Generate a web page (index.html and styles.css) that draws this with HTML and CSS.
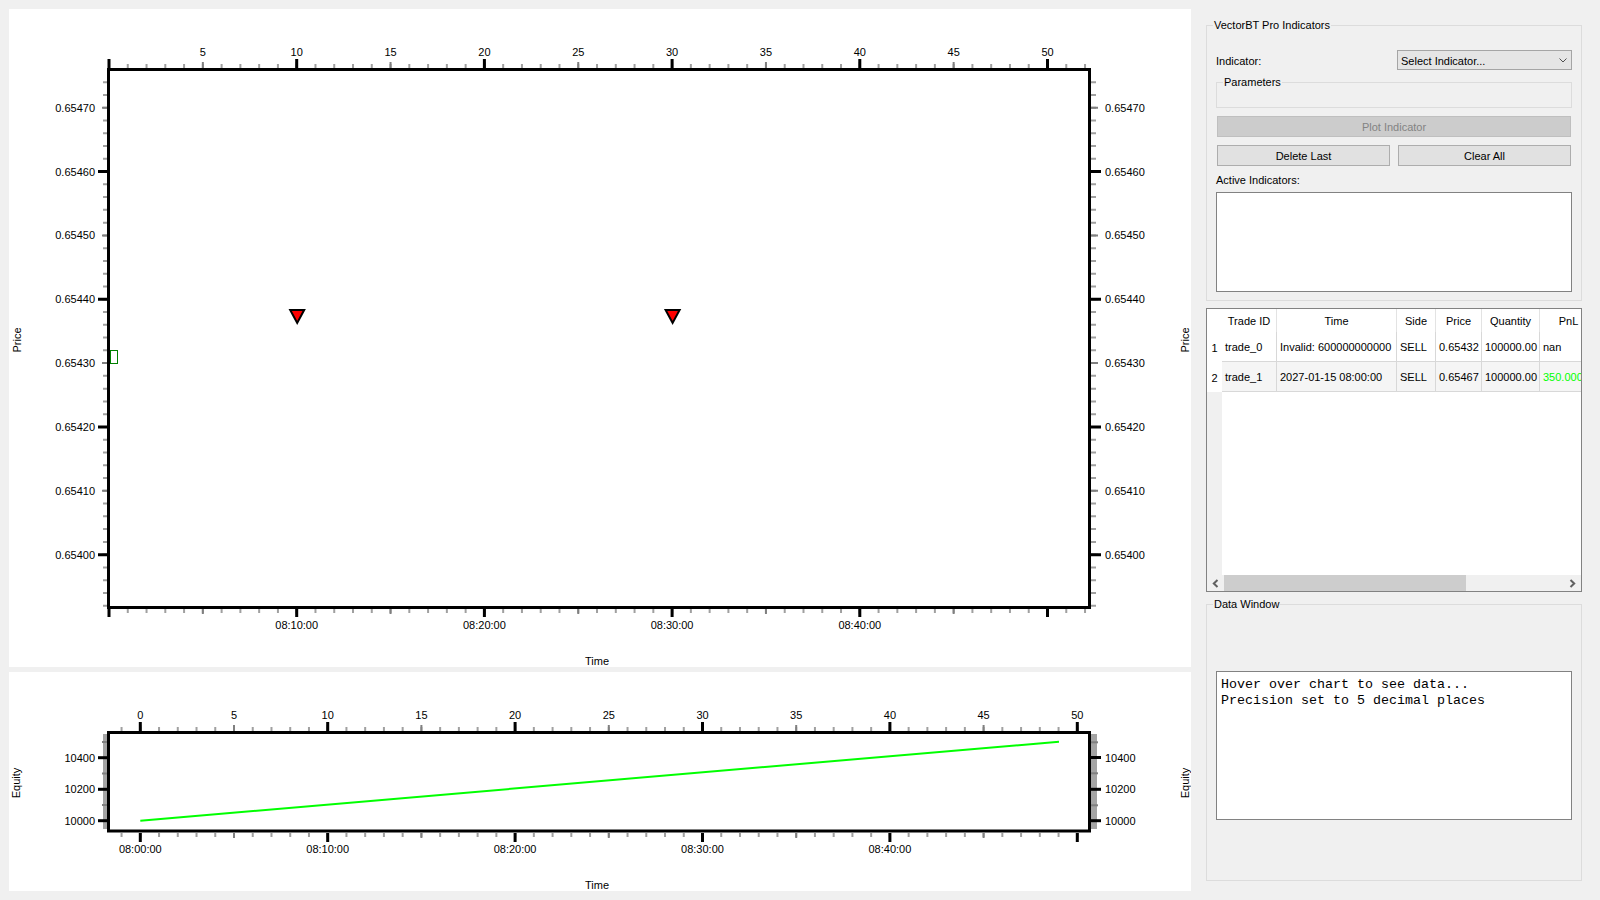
FILE: index.html
```html
<!DOCTYPE html>
<html lang="en">
<head>
<meta charset="utf-8">
<title>VectorBT Chart</title>
<link rel="stylesheet" href="styles.css">
</head>
<body>
<div class="app">
  <div class="charts">
    <div class="panel panel-main">
      <svg class="plot" width="1182" height="658" viewBox="9 9 1182 658">
        <!-- top ticks -->
        <line x1="108" y1="66" x2="1091" y2="66" class="t-minor" stroke-width="4" stroke-dasharray="2 16.77"/>
        <line x1="108" y1="65" x2="1091" y2="65" class="t-mid" stroke-width="6" stroke-dasharray="2 91.85"/>
        <line x1="107.5" y1="63.5" x2="1091" y2="63.5" class="t-major" stroke-width="9" stroke-dasharray="3 184.7"/>
        <!-- bottom ticks -->
        <line x1="108" y1="611" x2="1091" y2="611" class="t-minor" stroke-width="4" stroke-dasharray="2 16.77"/>
        <line x1="108" y1="611.5" x2="1091" y2="611.5" class="t-mid" stroke-width="5" stroke-dasharray="2 91.85"/>
        <line x1="107.5" y1="613" x2="1091" y2="613" class="t-major" stroke-width="8" stroke-dasharray="3 184.7"/>
        <!-- left ticks -->
        <line x1="105" y1="81.16" x2="105" y2="607" class="t-minor" stroke-width="4" stroke-dasharray="2 10.77"/>
        <line x1="104.5" y1="106.7" x2="104.5" y2="607" class="t-mid" stroke-width="5" stroke-dasharray="2 61.85"/>
        <line x1="102.5" y1="170.05" x2="102.5" y2="607" class="t-major" stroke-width="9" stroke-dasharray="3 124.7"/>
        <!-- right ticks -->
        <line x1="1093.5" y1="81.16" x2="1093.5" y2="607" class="t-minor" stroke-width="5" stroke-dasharray="2 10.77"/>
        <line x1="1094.5" y1="106.7" x2="1094.5" y2="607" class="t-mid" stroke-width="7" stroke-dasharray="2 61.85"/>
        <line x1="1096" y1="170.05" x2="1096" y2="607" class="t-major" stroke-width="10" stroke-dasharray="3 124.7"/>
        <!-- frame -->
        <rect x="108.5" y="69.5" width="981" height="538" class="frame"/>
        <g class="lbl-c">
          <text x="202.85" y="56">5</text>
          <text x="296.7" y="56">10</text>
          <text x="390.55" y="56">15</text>
          <text x="484.4" y="56">20</text>
          <text x="578.25" y="56">25</text>
          <text x="672.1" y="56">30</text>
          <text x="765.95" y="56">35</text>
          <text x="859.8" y="56">40</text>
          <text x="953.65" y="56">45</text>
          <text x="1047.5" y="56">50</text>
          <text x="296.7" y="629">08:10:00</text>
          <text x="484.4" y="629">08:20:00</text>
          <text x="672.1" y="629">08:30:00</text>
          <text x="859.8" y="629">08:40:00</text>
          <text x="597" y="665">Time</text>
          <text transform="translate(20.5 340) rotate(-90)">Price</text>
          <text transform="translate(1189 340) rotate(-90)">Price</text>
        </g>
        <g class="lbl-e">
          <text x="95" y="111.7">0.65470</text>
          <text x="95" y="175.6">0.65460</text>
          <text x="95" y="239.4">0.65450</text>
          <text x="95" y="303.3">0.65440</text>
          <text x="95" y="367.2">0.65430</text>
          <text x="95" y="431">0.65420</text>
          <text x="95" y="494.9">0.65410</text>
          <text x="95" y="558.7">0.65400</text>
        </g>
        <g class="lbl-s">
          <text x="1105" y="111.7">0.65470</text>
          <text x="1105" y="175.6">0.65460</text>
          <text x="1105" y="239.4">0.65450</text>
          <text x="1105" y="303.3">0.65440</text>
          <text x="1105" y="367.2">0.65430</text>
          <text x="1105" y="431">0.65420</text>
          <text x="1105" y="494.9">0.65410</text>
          <text x="1105" y="558.7">0.65400</text>
        </g>
        <!-- data -->
        <rect x="110.5" y="350.5" width="7" height="13" class="candle"/>
        <polygon points="290.2,310 304.2,310 297.2,323" class="sell"/>
        <polygon points="665.6,310 679.6,310 672.6,323" class="sell"/>
      </svg>
    </div>
    <div class="panel panel-eq">
      <svg class="plot" width="1182" height="219" viewBox="9 672 1182 219">
        <!-- top ticks -->
        <line x1="120.56" y1="729" x2="1080" y2="729" class="t-minor" stroke-width="4" stroke-dasharray="2 16.74"/>
        <line x1="139.3" y1="728" x2="1080" y2="728" class="t-mid" stroke-width="6" stroke-dasharray="2 91.7"/>
        <line x1="138.8" y1="726.5" x2="1080" y2="726.5" class="t-major" stroke-width="9" stroke-dasharray="3 184.4"/>
        <!-- bottom ticks -->
        <line x1="120.56" y1="835" x2="1080" y2="835" class="t-minor" stroke-width="4" stroke-dasharray="2 16.74"/>
        <line x1="139.3" y1="835.5" x2="1080" y2="835.5" class="t-mid" stroke-width="5" stroke-dasharray="2 91.7"/>
        <line x1="138.8" y1="837.5" x2="1080" y2="837.5" class="t-major" stroke-width="9" stroke-dasharray="3 184.4"/>
        <!-- left axis band -->
        <rect x="103" y="734" width="5" height="95" class="band"/>
        <line x1="102" y1="742" x2="108" y2="742" class="t-mid" stroke-width="2"/>
        <line x1="102" y1="773.5" x2="108" y2="773.5" class="t-mid" stroke-width="2"/>
        <line x1="102" y1="805" x2="108" y2="805" class="t-mid" stroke-width="2"/>
        <line x1="98" y1="757.7" x2="108" y2="757.7" class="t-major" stroke-width="3"/>
        <line x1="98" y1="789.3" x2="108" y2="789.3" class="t-major" stroke-width="3"/>
        <line x1="98" y1="820.7" x2="108" y2="820.7" class="t-major" stroke-width="3"/>
        <!-- right axis band -->
        <rect x="1091" y="734" width="6" height="95" class="band"/>
        <line x1="1090" y1="742.3" x2="1098" y2="742.3" class="t-mid" stroke-width="2"/>
        <line x1="1090" y1="773.3" x2="1098" y2="773.3" class="t-mid" stroke-width="2"/>
        <line x1="1090" y1="805.3" x2="1098" y2="805.3" class="t-mid" stroke-width="2"/>
        <line x1="1090" y1="757.5" x2="1101" y2="757.5" class="t-major" stroke-width="3"/>
        <line x1="1090" y1="789.3" x2="1101" y2="789.3" class="t-major" stroke-width="3"/>
        <line x1="1090" y1="820.7" x2="1101" y2="820.7" class="t-major" stroke-width="3"/>
        <!-- frame -->
        <rect x="108.5" y="732.5" width="981" height="98.5" class="frame"/>
        <!-- equity curve -->
        <polyline points="140.3,820.7 1059,741.7" class="equity"/>
        <g class="lbl-c">
          <text x="140.3" y="719">0</text>
          <text x="234" y="719">5</text>
          <text x="327.7" y="719">10</text>
          <text x="421.4" y="719">15</text>
          <text x="515.1" y="719">20</text>
          <text x="608.8" y="719">25</text>
          <text x="702.5" y="719">30</text>
          <text x="796.2" y="719">35</text>
          <text x="889.9" y="719">40</text>
          <text x="983.6" y="719">45</text>
          <text x="1077.3" y="719">50</text>
          <text x="140.3" y="852.5">08:00:00</text>
          <text x="327.7" y="852.5">08:10:00</text>
          <text x="515.1" y="852.5">08:20:00</text>
          <text x="702.5" y="852.5">08:30:00</text>
          <text x="889.9" y="852.5">08:40:00</text>
          <text x="597" y="889">Time</text>
          <text transform="translate(20 783) rotate(-90)">Equity</text>
          <text transform="translate(1189 783) rotate(-90)">Equity</text>
        </g>
        <g class="lbl-e">
          <text x="95" y="761.7">10400</text>
          <text x="95" y="793.3">10200</text>
          <text x="95" y="824.7">10000</text>
        </g>
        <g class="lbl-s">
          <text x="1105" y="761.5">10400</text>
          <text x="1105" y="793.3">10200</text>
          <text x="1105" y="824.7">10000</text>
        </g>
      </svg>
    </div>
  </div>

  <div class="side">
    <div class="group g-ind">
      <div class="g-title">VectorBT Pro Indicators</div>
      <div class="ind-row">
        <span class="ind-label">Indicator:</span>
        <div class="combo">
          <span class="combo-text">Select Indicator...</span>
          <svg class="chev" width="8" height="5" viewBox="0 0 8 5"><polyline points="0.5,0.5 4,4 7.5,0.5"/></svg>
        </div>
      </div>
      <div class="group g-params"><div class="g-title">Parameters</div></div>
      <div class="btn btn-disabled">Plot Indicator</div>
      <div class="btn-row">
        <div class="btn">Delete Last</div>
        <div class="btn">Clear All</div>
      </div>
      <div class="lbl">Active Indicators:</div>
      <div class="listbox"></div>
    </div>

    <div class="table">
      <div class="t-scroll">
        <div class="grid">
          <div class="corner"></div>
          <div class="hcell">Trade ID</div>
          <div class="hcell">Time</div>
          <div class="hcell">Side</div>
          <div class="hcell">Price</div>
          <div class="hcell">Quantity</div>
          <div class="hcell">PnL</div>

          <div class="rowhead">1</div>
          <div class="cell">trade_0</div>
          <div class="cell">Invalid: 600000000000</div>
          <div class="cell">SELL</div>
          <div class="cell">0.65432</div>
          <div class="cell">100000.00</div>
          <div class="cell">nan</div>

          <div class="rowhead">2</div>
          <div class="cell alt">trade_1</div>
          <div class="cell alt">2027-01-15 08:00:00</div>
          <div class="cell alt">SELL</div>
          <div class="cell alt">0.65467</div>
          <div class="cell alt">100000.00</div>
          <div class="cell alt pos">350.000</div>

          <div class="rowhead-empty"></div>
          <div class="empty"></div>
        </div>
      </div>
      <div class="hbar">
        <div class="arrow"><svg width="7" height="9" viewBox="0 0 7 9"><polyline points="5.5,1 1.8,4.5 5.5,8"/></svg></div>
        <div class="thumb"></div>
        <div class="track"></div>
        <div class="arrow"><svg width="7" height="9" viewBox="0 0 7 9"><polyline points="1.5,1 5.2,4.5 1.5,8"/></svg></div>
      </div>
    </div>

    <div class="group g-data">
      <div class="g-title">Data Window</div>
      <div class="datatext">Hover over chart to see data...
Precision set to 5 decimal places</div>
    </div>
  </div>
</div>
</body>
</html>
```

FILE: styles.css
```css
* { box-sizing: border-box; }
html, body { margin: 0; padding: 0; }
body {
  width: 1600px;
  height: 900px;
  overflow: hidden;
  background: #f0f0f0;
  color: #000;
  font-family: "Liberation Sans", Arial, sans-serif;
  font-size: 11px;
}
.app { display: flex; height: 900px; }

/* ---------- charts ---------- */
.charts {
  width: 1191px;
  padding: 9px 0 9px 9px;
  display: flex;
  flex-direction: column;
  gap: 5px;
}
.panel { background: #fff; }
.panel-main { height: 658px; }
.panel-eq { height: 219px; }
.plot { display: block; }
.plot text {
  font-family: "Liberation Sans", Arial, sans-serif;
  font-size: 11px;
  fill: #000;
}
.lbl-c text { text-anchor: middle; }
.lbl-e text { text-anchor: end; }
.lbl-s text { text-anchor: start; }
.t-minor { stroke: #a0a0a0; }
.t-mid { stroke: #808080; }
.t-major { stroke: #000; }
.frame { fill: none; stroke: #000; stroke-width: 3; }
.band { fill: #a4a4a4; }
.candle { fill: none; stroke: #008000; stroke-width: 1; }
.sell { fill: #ff0000; stroke: #000; stroke-width: 2; stroke-linejoin: miter; }
.equity { fill: none; stroke: #00ff00; stroke-width: 2; }

/* ---------- side panel ---------- */
.side {
  width: 409px;
  padding-left: 15px;
  display: flex;
  flex-direction: column;
}
.group {
  border: 1px solid #dcdcdc;
  padding: 0 9px;
}
.g-title {
  margin: -8px 0 0 -3px;
  padding: 0 1px;
  line-height: 14px;
  height: 14px;
  background: #f0f0f0;
  width: max-content;
}
.g-ind {
  margin-top: 25px;
  width: 376px;
  padding-bottom: 8px;
  display: flex;
  flex-direction: column;
}
.ind-row {
  margin-top: 18px;
  height: 20px;
  display: flex;
  align-items: center;
  justify-content: space-between;
}
.ind-label, .combo-text { padding-top: 2px; }
.combo {
  width: 175px;
  height: 20px;
  border: 1px solid #a5a5a5;
  background: #e5e5e5;
  padding: 0 4px 0 3px;
  display: flex;
  align-items: center;
  justify-content: space-between;
}
.chev polyline { fill: none; stroke: #505050; stroke-width: 1; }
.g-params {
  margin-top: 12px;
  height: 26px;
}
.btn {
  height: 21px;
  border: 1px solid #adadad;
  background: #e1e1e1;
  display: flex;
  align-items: center;
  justify-content: center;
}
.btn-disabled {
  margin: 8px 1px 0;
  background: #cccccc;
  border-color: #bfbfbf;
  color: #838383;
}
.btn-row {
  margin-top: 8px;
  padding: 0 1px;
  display: flex;
  gap: 8px;
}
.btn-row .btn { flex: 1; }
.lbl {
  margin-top: 7px;
  line-height: 14px;
}
.listbox {
  margin-top: 5px;
  height: 100px;
  border: 1px solid #828282;
  background: #fff;
}

/* ---------- table ---------- */
.table {
  margin-top: 7px;
  width: 376px;
  height: 284px;
  border: 1px solid #828282;
  background: #fff;
  display: flex;
  flex-direction: column;
}
.t-scroll {
  flex: 1;
  overflow: hidden;
}
.grid {
  display: grid;
  width: max-content;
  height: 100%;
  grid-template-columns: 15px 55px 120px 39px 46px 58px 58px;
  grid-template-rows: 23px 30px 30px 1fr;
}
.corner { background: #fff; }
.hcell {
  border-right: 1px solid #e3e3e3;
  text-align: center;
  padding-top: 1px;
  line-height: 23px;
  background: #fff;
}
.rowhead {
  background: #fff;
  text-align: center;
  padding-top: 1px;
  line-height: 30px;
}
.cell {
  border-right: 1px solid #d8d8d8;
  border-bottom: 1px solid #d8d8d8;
  padding: 1px 0 0 3px;
  line-height: 29px;
  white-space: nowrap;
  overflow: hidden;
}
.cell.alt { background: #f5f5f5; }
.cell.pos { color: #00ff00; }
.rowhead-empty { background: #f0f0f0; }
.empty { grid-column: 2 / 8; background: #fff; }
.hbar {
  height: 16px;
  background: #f0f0f0;
  display: flex;
}
.arrow {
  width: 17px;
  display: flex;
  align-items: center;
  justify-content: center;
}
.arrow polyline { fill: none; stroke: #606060; stroke-width: 2; }
.thumb { width: 242px; background: #cdcdcd; }
.track { flex: 1; }

/* ---------- data window ---------- */
.g-data {
  margin-top: 12px;
  width: 376px;
  height: 277px;
}
.datatext {
  margin-top: 60px;
  height: 149px;
  border: 1px solid #828282;
  background: #fff;
  padding: 5px 4px 0;
  font-family: "Liberation Mono", "Courier New", monospace;
  font-size: 13.33px;
  line-height: 16px;
  white-space: pre;
}
```
